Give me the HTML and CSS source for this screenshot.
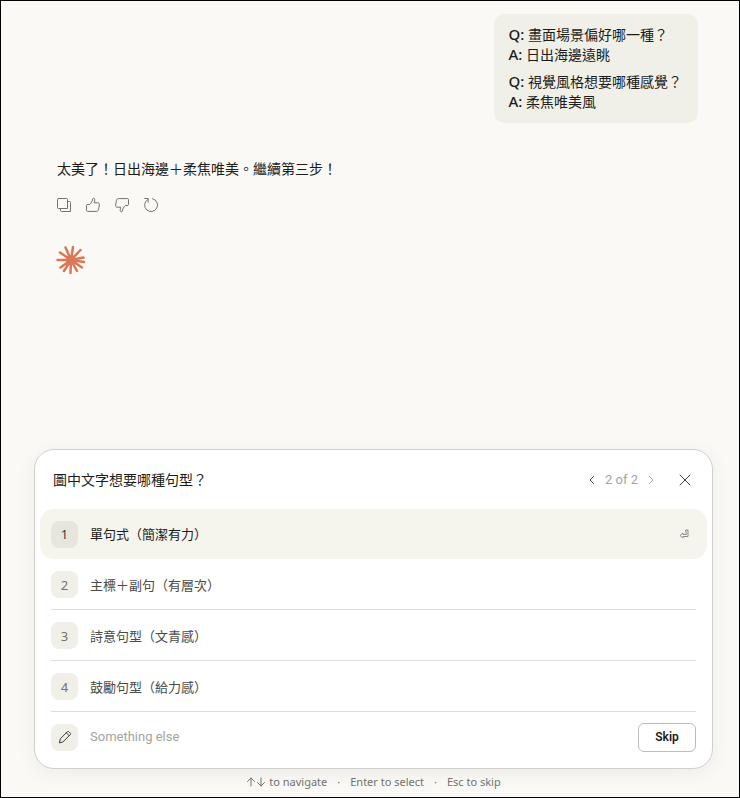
FILE: index.html
```html
<!DOCTYPE html>
<html lang="zh-Hant">
<head>
  <meta charset="UTF-8">
  <meta name="viewport" content="width=device-width, initial-scale=1">
  <title>Chat</title>
  <link rel="stylesheet" href="styles.css">
</head>
<body>

<main class="chat">
  <div class="user-message">
    <p><span class="tag">Q:</span> 畫面場景偏好哪一種？<br><span class="tag">A:</span> 日出海邊遠眺</p>
    <p><span class="tag">Q:</span> 視覺風格想要哪種感覺？<br><span class="tag">A:</span> 柔焦唯美風</p>
  </div>

  <div class="reply">
    <p>太美了！日出海邊＋柔焦唯美。繼續第三步！</p>
    <div class="actions">
      <button type="button" aria-label="Copy">
        <svg viewBox="0 0 16 16"><path d="M2.500 1.500h8a1 1 0 0 1 1 1v9h-9a1 1 0 0 1-1-1v-8a1 1 0 0 1 1-1zM11.500 4.500h2a1 1 0 0 1 1 1v9h-9a1 1 0 0 1-1-1v-2"/></svg>
      </button>
      <button type="button" aria-label="Good response">
        <svg viewBox="0 0 16 16"><path d="M2.500 7.500h1.800c.5 0 .9-.2 1.100-.6L7.200 4l.5-2.200c.3-1 1.900-.8 2.100.6.1 1.100-.3 2.400-.6 3.400h3.600c1.100 0 1.800.9 1.600 1.900l-.9 5c-.2 1-.9 1.700-1.900 1.700H2.500c-.6 0-1-.4-1-1V8.500c0-.6.4-1 1-1z"/></svg>
      </button>
      <button type="button" aria-label="Bad response">
        <svg viewBox="0 0 16 16"><path d="M13.500 8.500h-1.800c-.5 0-.9.2-1.100.6L8.800 12l-.5 2.200c-.3 1-1.900.8-2.100-.6-.1-1.100.3-2.400.6-3.400H3.200c-1.100 0-1.800-.9-1.600-1.900l.9-5c.2-1 .9-1.700 1.900-1.700h9.100c.6 0 1 .4 1 1v4.900c0 .6-.4 1-1 1z"/></svg>
      </button>
      <button type="button" aria-label="Retry">
        <svg viewBox="0 0 16 16"><path d="M9.500 1.700A6.500 6.500 0 1 1 4.500 2.600M1.700 1.500h3.500v3.800"/></svg>
      </button>
    </div>
    <svg class="spark" viewBox="0 0 30 30" aria-hidden="true">
      <path stroke-width="2.500" d="M15 15L9.500 2.500M15 15L17 2M15 15L24.500 5M15 15L27.500 12.500M15 15L28 17M15 15L26 22.500M15 15L21 26M15 15L14.500 28M15 15L8 26M15 15L4.500 22.500M15 15L1.500 15M15 15L4 7.500"/>
      <circle cx="15" cy="15" r="5"/>
    </svg>
  </div>
</main>

<section class="composer">
  <form class="card">
    <header class="card-header">
      <h2>圖中文字想要哪種句型？</h2>
      <div class="pager">
        <button type="button" aria-label="Previous"><svg viewBox="0 0 12 12"><path d="M7.500 2.500L4 6l3.500 3.500"/></svg></button>
        <span>2 of 2</span>
        <button type="button" class="disabled" aria-label="Next"><svg viewBox="0 0 12 12"><path d="M4.500 2.500L8 6l-3.500 3.500"/></svg></button>
      </div>
      <button type="button" class="close" aria-label="Close"><svg viewBox="0 0 12 12"><path d="M1 1l10 10M11 1L1 11"/></svg></button>
    </header>

    <div class="options">
      <button type="button" class="option selected">
        <span class="key">1</span>
        <span class="label">單句式（簡潔有力）</span>
        <svg class="enter" viewBox="0 0 10 10"><path d="M7 1h2v6.500H4V9L1 6.500 4 4v1.500h3z"/></svg>
      </button>
      <button type="button" class="option">
        <span class="key">2</span>
        <span class="label">主標＋副句（有層次）</span>
      </button>
      <button type="button" class="option">
        <span class="key">3</span>
        <span class="label">詩意句型（文青感）</span>
      </button>
      <button type="button" class="option">
        <span class="key">4</span>
        <span class="label">鼓勵句型（給力感）</span>
      </button>
      <div class="other">
        <label class="key" for="other"><svg viewBox="0 0 14 14"><path d="M1.500 12.500l.8-3.700 7-7c.5-.5 1.200-.5 1.700 0l1.200 1.200c.5.5.5 1.200 0 1.700l-7 7zM8.300 2.800l2.900 2.900"/></svg></label>
        <input id="other" type="text" placeholder="Something else">
        <button type="button" class="skip">Skip</button>
      </div>
    </div>
  </form>
  <p class="hints">
    <span><svg viewBox="0 0 20 10"><path d="M5 9V1M1.500 4.500L5 1l3.500 3.500M15 1v8M11.500 5.500L15 9l3.500-3.500"/></svg>to navigate</span>
    <span>·</span>
    <span>Enter to select</span>
    <span>·</span>
    <span>Esc to skip</span>
  </p>
</section>

</body>
</html>
```
FILE: styles.css
```css
* {
  margin: 0;
  padding: 0;
  box-sizing: border-box;
}

body {
  min-height: 100vh;
  display: flex;
  flex-direction: column;
  border: 1px solid #000;
  background: #faf9f5;
  color: #1c1c1a;
  font-family: "Noto Sans", "Noto Sans CJK TC", sans-serif;
  font-size: 14px;
  line-height: 20px;
}

button,
input {
  font: inherit;
  color: inherit;
  border: none;
  background: none;
}

button {
  cursor: pointer;
}

svg {
  display: block;
  fill: none;
  stroke: currentColor;
  stroke-linecap: round;
  stroke-linejoin: round;
}

/* Conversation */
.chat {
  flex: 1;
  display: flex;
  flex-direction: column;
  padding: 13px 41px 24px 56px;
}

.user-message {
  align-self: flex-end;
  display: flex;
  flex-direction: column;
  gap: 7px;
  padding: 11px 16px 11px 15px;
  border-radius: 10px;
  background: #f0efe8;
}

.tag {
  font-size: 15px;
  font-weight: 500;
  line-height: 16px;
}

.reply {
  margin-top: 36px;
}

.actions {
  display: flex;
  gap: 13px;
  margin: 18px 0 32px -1px;
}

.actions svg {
  width: 16px;
  height: 16px;
  color: #73726c;
}

.spark {
  width: 30px;
  height: 30px;
  margin-left: -1px;
  color: #d97757;
}

.spark circle {
  fill: currentColor;
  stroke: none;
}

/* Question card */
.composer {
  padding: 0 26px 5px 33px;
}

.card {
  padding: 0 5px 6px;
  border: 1px solid #d1d0cc;
  border-radius: 20px;
  background: #fff;
  box-shadow: 0 4px 20px rgba(0, 0, 0, 0.06);
}

.card-header {
  display: flex;
  align-items: center;
  height: 59px;
  padding: 0 16px 0 13px;
}

.card-header h2 {
  flex: 1;
  font-size: 14px;
  font-weight: 400;
}

.pager {
  display: flex;
  align-items: center;
  gap: 7px;
  font-family: Roboto, sans-serif;
  font-size: 13px;
  color: #a5a49f;
}

.pager svg {
  width: 12px;
  height: 12px;
  color: #3d3d3a;
}

.pager .disabled svg {
  color: #a5a49f;
}

.close {
  margin-left: 22px;
}

.close svg {
  width: 12px;
  height: 12px;
  color: #3d3d3a;
}

.option,
.other {
  position: relative;
  display: flex;
  align-items: center;
  gap: 12px;
  width: 100%;
  height: 51px;
  padding: 0 11px;
  font-size: 13px;
  text-align: left;
  color: #4a4a46;
}

.option::after {
  content: '';
  position: absolute;
  left: 11px;
  right: 11px;
  bottom: 0;
  height: 1px;
  background: #dedddb;
}

.option.selected {
  height: 50px;
  border-radius: 14px;
  background: #f5f4ed;
  color: #1c1c1a;
}

.option.selected::after {
  display: none;
}

.other {
  height: 50px;
}

.key {
  display: flex;
  align-items: center;
  justify-content: center;
  width: 27px;
  height: 27px;
  border-radius: 8px;
  background: #f0efe8;
  color: #73726c;
}

.selected .key {
  background: #e7e6dd;
  color: #3d3d3a;
}

.key svg {
  width: 14px;
  height: 14px;
  color: #3d3d3a;
}

.label {
  flex: 1;
}

.enter {
  width: 10px;
  height: 10px;
  margin-right: 7px;
  color: #8c8b85;
}

.other input {
  flex: 1;
  min-width: 0;
  outline: none;
  font-family: Roboto, "Noto Sans CJK TC", sans-serif;
}

.other input::placeholder {
  color: #a5a49f;
  opacity: 1;
}

.skip {
  width: 58px;
  height: 29px;
  border: 1px solid #bdbcb7;
  border-radius: 6px;
  font-family: Roboto, sans-serif;
  font-size: 12px;
  font-weight: 600;
  color: #1c1c1a;
}

.hints {
  display: flex;
  justify-content: center;
  gap: 10px;
  margin-top: 3px;
  font-size: 11px;
  color: #73726c;
}

.hints span {
  display: flex;
  align-items: center;
  gap: 3px;
}

.hints svg {
  width: 20px;
  height: 10px;
}
```
